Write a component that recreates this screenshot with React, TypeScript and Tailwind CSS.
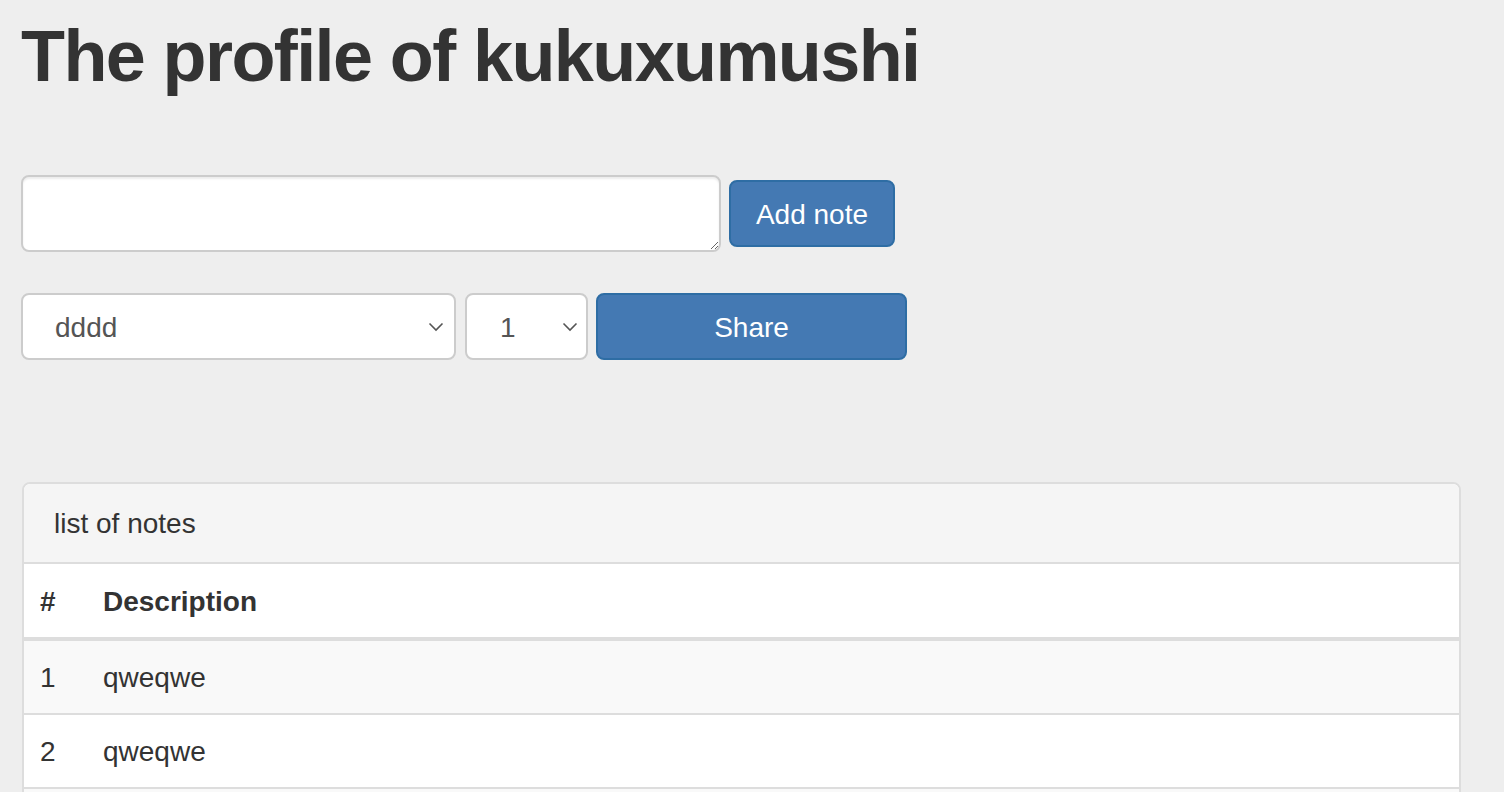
import React from "react";

function Chevron() {
  return (
    <svg width="16" height="10" viewBox="0 0 16 10" className="shrink-0">
      <polyline points="1.5,1.5 8,8 14.5,1.5" fill="none" stroke="#555" strokeWidth="1.6" />
    </svg>
  );
}

export default function App() {
  const rows = [
    { n: "1", d: "qweqwe", bg: "bg-[#f9f9f9]" },
    { n: "2", d: "qweqwe", bg: "bg-white" },
  ];
  return (
    <div className="h-[792px] w-full bg-[#eeeeee] text-[#333] font-['Liberation_Sans',Arial,sans-serif] overflow-hidden">
      <div className="pl-[21px] pr-[44px] pt-[17px]">
        <h1 className="text-[72px] leading-[79px] font-bold tracking-[-1.6px] h-[79px]">
          The profile of kukuxumushi
        </h1>

        <div className="mt-[79px] flex items-center gap-[8px]">
          <textarea className="w-[700px] h-[77px] bg-white border-2 border-[#cccccc] rounded-[8px] outline-none shadow-[inset_0_2px_2px_rgba(0,0,0,0.075)]" />
          <button className="h-[67px] w-[166px] bg-[#4479b3] border-2 border-[#2e6da4] rounded-[8px] text-white text-[28px] leading-none pt-[2px]">
            Add note
          </button>
        </div>

        <div className="mt-[41px] flex items-center gap-[8px]">
          <div className="w-[435px] h-[67px] bg-white border-2 border-[#cccccc] rounded-[8px] flex items-center justify-between pl-[32px] pr-[10px] text-[28px] text-[#555]">
            <span className="pt-[3px]">dddd</span>
            <Chevron />
          </div>
          <div className="ml-[1px] w-[123px] h-[67px] bg-white border-2 border-[#cccccc] rounded-[8px] flex items-center justify-between pl-[33px] pr-[8px] text-[28px] text-[#555]">
            <span className="pt-[3px]">1</span>
            <Chevron />
          </div>
          <button className="h-[67px] w-[311px] bg-[#4479b3] border-2 border-[#2e6da4] rounded-[8px] text-white text-[28px] leading-none pt-[2px]">
            Share
          </button>
        </div>

        <div className="mt-[122px] ml-[1px] w-[1439px] border-2 border-[#dddddd] rounded-[8px] overflow-hidden bg-white">
          <div className="bg-[#f5f5f5] border-b-2 border-[#dddddd] px-[30px] pt-[20px] pb-[18px] text-[28px] leading-[40px]">
            list of notes
          </div>
          <table className="w-full text-[28px] leading-[40px] border-collapse">
            <thead>
              <tr className="border-b-4 border-[#dddddd]">
                <th className="text-left font-bold px-[16px] pt-[18px] pb-[15px] w-[63px]">#</th>
                <th className="text-left font-bold px-[16px] pt-[18px] pb-[15px]">Description</th>
              </tr>
            </thead>
            <tbody>
              {rows.map((r) => (
                <tr key={r.n} className={`${r.bg} border-b-2 border-[#dddddd]`}>
                  <td className="px-[16px] pt-[17px] pb-[15px] w-[63px]">{r.n}</td>
                  <td className="px-[16px] pt-[17px] pb-[15px]">{r.d}</td>
                </tr>
              ))}
              <tr className="bg-[#f9f9f9] h-[72px]">
                <td className="w-[63px]" />
                <td />
              </tr>
            </tbody>
          </table>
        </div>
      </div>
    </div>
  );
}
